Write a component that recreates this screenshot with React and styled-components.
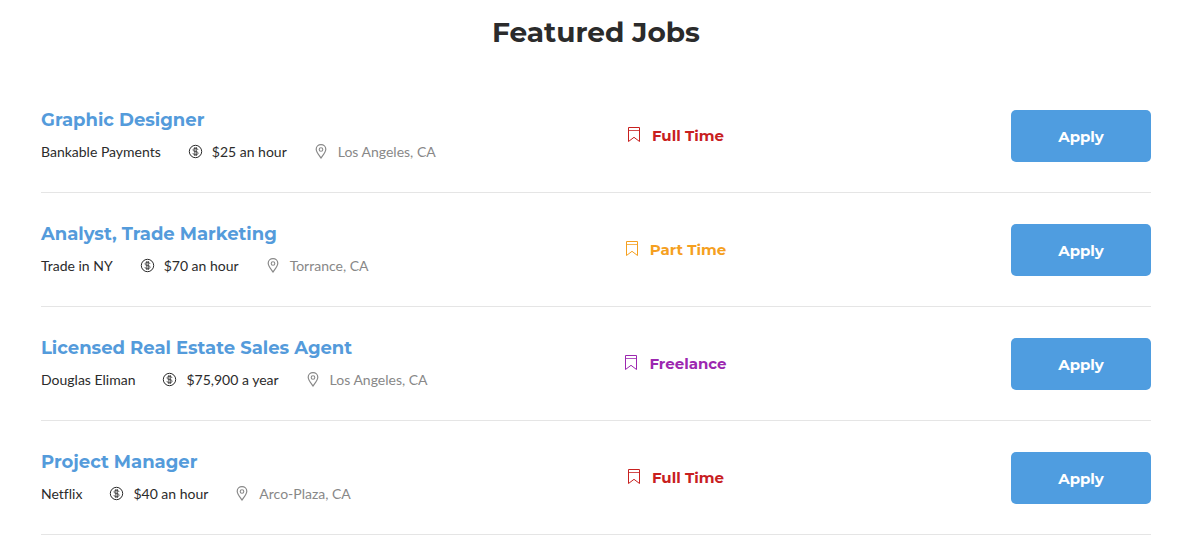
import React from 'react';
import styled, { createGlobalStyle } from 'styled-components';

const GlobalStyle = createGlobalStyle`
  *, *::before, *::after { box-sizing: border-box; }
  body {
    margin: 0;
    background: #fff;
    color: #2b2b2b;
    font-family: Lato, "Liberation Sans", sans-serif;
    font-size: 14px;
    line-height: 24px;
    font-variant-ligatures: none;
  }
`;

const headingFont = 'Montserrat, Inter, "Liberation Sans", sans-serif';

const Section = styled.section`
  padding: 12px 35px 14px 41px;
`;

const Heading = styled.h2`
  margin: 0 0 27px;
  font: 700 28px/40px ${headingFont};
  text-align: center;
  color: #2b2b2b;
`;

const JobList = styled.ul`
  margin: 0;
  padding: 0;
  list-style: none;
`;

const JobRow = styled.li`
  display: grid;
  grid-template-columns: 50% 158px 1fr;
  align-items: center;
  padding: 29px 0 28px;
  border-bottom: 1px solid #e5e5e5;
`;

const JobTitle = styled.h3`
  margin: 0 0 8px;
  font: 700 18px/24px ${headingFont};
`;

const TitleLink = styled.a`
  color: #549bdb;
  text-decoration: none;
`;

const Details = styled.div`
  display: flex;
  gap: 27px;
`;

const Detail = styled.span`
  display: inline-flex;
  align-items: center;
  gap: 10px;
  white-space: nowrap;
  color: ${({ $muted }) => ($muted ? '#888' : '#2b2b2b')};
`;

const JobType = styled.div`
  display: flex;
  align-items: center;
  justify-content: center;
  gap: 10px;
  white-space: nowrap;
  font: 700 15px/24px ${headingFont};
  color: ${({ $color }) => $color};
`;

const ApplyButton = styled.button`
  justify-self: end;
  width: 140px;
  height: 52px;
  padding: 1px 0 0;
  border: 0;
  border-radius: 5px;
  background: #4f9de0;
  color: #fff;
  font: 700 15px/24px ${headingFont};
  cursor: pointer;
`;

const Icon = styled.svg`
  flex: none;
  width: ${({ $size }) => $size}px;
  height: ${({ $size }) => $size}px;
  overflow: visible;
  fill: none;
  stroke: currentColor;
`;

const MoneyIcon = () => (
  <Icon $size={14} viewBox="0 0 14 14" aria-hidden="true">
    <circle cx="7.5" cy="6.5" r="6.2" />
    <path d="M10 4.900C9.800 3.800 8.800 3.400 7.500 3.400S5 3.900 5 4.900 6.100 6.300 7.500 6.500s2.600.6 2.600 1.700S8.900 9.700 7.500 9.700 5 9.200 4.900 8.100M6.800 2V11M8.300 2V11" strokeWidth="0.8" />
  </Icon>
);

const PinIcon = () => (
  <Icon $size={14} viewBox="0 0 14 14" aria-hidden="true">
    <path d="M7 13C5.800 11 2.200 7.200 2.200 4.200A4.800 4.500 0 0 1 11.800 4.200C11.800 7.200 8.200 11 7 13Z" strokeWidth="1.200" />
    <circle cx="7" cy="4.500" r="1.800" strokeWidth="1.100" />
  </Icon>
);

const BookmarkIcon = () => (
  <Icon $size={16} viewBox="0 0 16 16" aria-hidden="true">
    <path d="M2.500 -.5H13.500V13.500L8 9.300L2.500 13.500Z" />
    <path d="M2.500 2.500H13.500" strokeWidth="0.800" />
  </Icon>
);

const typeColors = {
  'Full Time': '#c8201f',
  'Part Time': '#f5a01f',
  Freelance: '#9c27b0',
};

const jobs = [
  { title: 'Graphic Designer', company: 'Bankable Payments', pay: '$25 an hour', place: 'Los Angeles, CA', type: 'Full Time' },
  { title: 'Analyst, Trade Marketing', company: 'Trade in NY', pay: '$70 an hour', place: 'Torrance, CA', type: 'Part Time' },
  { title: 'Licensed Real Estate Sales Agent', company: 'Douglas Eliman', pay: '$75,900 a year', place: 'Los Angeles, CA', type: 'Freelance' },
  { title: 'Project Manager', company: 'Netflix', pay: '$40 an hour', place: 'Arco-Plaza, CA', type: 'Full Time' },
];

export default function App() {
  return (
    <>
      <GlobalStyle />
      <Section>
        <Heading>Featured Jobs</Heading>
        <JobList>
          {jobs.map((job) => (
            <JobRow key={job.title}>
              <div>
                <JobTitle><TitleLink href="#">{job.title}</TitleLink></JobTitle>
                <Details>
                  <Detail>{job.company}</Detail>
                  <Detail><MoneyIcon />{job.pay}</Detail>
                  <Detail $muted><PinIcon />{job.place}</Detail>
                </Details>
              </div>
              <JobType $color={typeColors[job.type]}><BookmarkIcon />{job.type}</JobType>
              <ApplyButton type="button">Apply</ApplyButton>
            </JobRow>
          ))}
        </JobList>
      </Section>
    </>
  );
}
